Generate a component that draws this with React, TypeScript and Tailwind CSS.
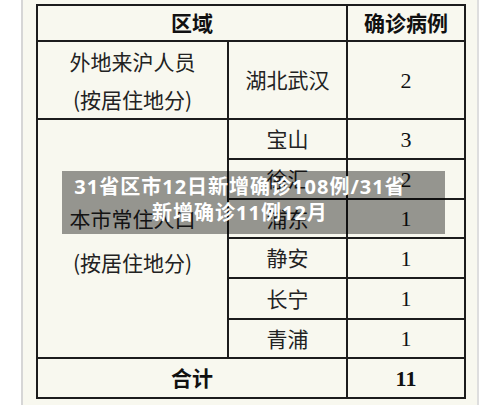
const cjk = "font-['Noto_Sans_CJK_SC',sans-serif]";
const num = "font-['Liberation_Serif','Times_New_Roman',serif]";

const districts = [
  { name: "宝山", count: 3, h: "h-[40px]" },
  { name: "徐汇", count: 2, h: "h-[40px]" },
  { name: "浦东", count: 1, h: "h-[39px]" },
  { name: "静安", count: 1, h: "h-[40px]" },
  { name: "长宁", count: 1, h: "h-[41px]" },
  { name: "青浦", count: 1, h: "h-[39px]" },
];

const cell = "border-2 border-[#1c1c1c] text-center align-middle p-0";

export default function App() {
  return (
    <div className="w-[500px] h-[405px] overflow-hidden bg-white flex">
      <div className="ml-[21px] w-[458px] h-[405px] bg-[#f8f8ef] border-x-2 border-l-[#d6d6d6] border-r-[#dedede]">
        <div className="relative ml-[13px] mt-[4px] w-[428px]">
          <table className={`w-[428px] table-fixed border-collapse text-[#222] text-[21px] ${cjk}`}>
            <colgroup>
              <col className="w-[191px]" />
              <col className="w-[119px]" />
              <col className="w-[118px]" />
            </colgroup>
            <tbody>
              <tr className="h-[36px]">
                <td colSpan={2} className={`${cell} font-bold text-[#111]`}>区域</td>
                <td className={`${cell} font-bold text-[#111]`}>确诊病例</td>
              </tr>
              <tr className="h-[78px]">
                <td className={`${cell} leading-[38px]`}>
                  外地来沪人员
                  <br />
                  (按居住地分)
                </td>
                <td className={cell}>湖北武汉</td>
                <td className={`${cell} ${num} text-[22px] text-[#111]`}>2</td>
              </tr>
              {districts.map((d, i) => (
                <tr key={d.name} className={d.h}>
                  {i === 0 && (
                    <td rowSpan={6} className={`${cell} leading-[44px] pt-[2px]`}>
                      本市常住人口
                      <br />
                      (按居住地分)
                    </td>
                  )}
                  <td className={cell}>{d.name}</td>
                  <td className={`${cell} ${num} text-[22px] text-[#111]`}>{d.count}</td>
                </tr>
              ))}
              <tr className="h-[40px]">
                <td colSpan={2} className={`${cell} font-bold text-[#111]`}>合计</td>
                <td className={`${cell} ${num} text-[22px] font-bold text-[#111]`}>11</td>
              </tr>
            </tbody>
          </table>

          <div className="absolute left-[26px] top-[167px] w-[383px] h-[63px] bg-black/40 pt-[3px] pr-[27px] text-center text-white font-bold text-[20px] leading-[26px] tracking-[1px] font-['Noto_Sans','Noto_Sans_CJK_SC',sans-serif]">
            31省区市12日新增确诊108例/31省
            <br />
            新增确诊11例12月
          </div>
        </div>
      </div>
    </div>
  );
}
